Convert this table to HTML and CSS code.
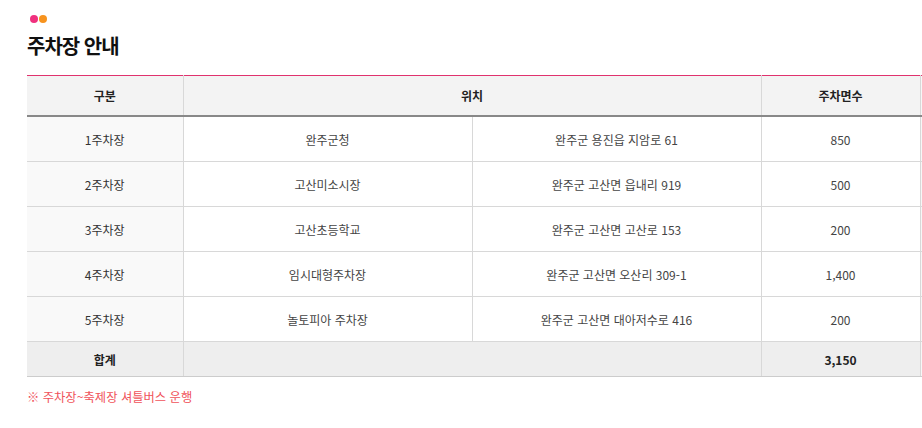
FILE: index.html
```html
<!DOCTYPE html>
<html lang="ko">
<head>
<meta charset="utf-8">
<link rel="stylesheet" href="styles.css">
</head>
<body>
<div class="page">
  <div class="dots"><span class="dot pink"></span><span class="dot orange"></span></div>
  <h2 class="title">주차장 안내</h2>
  <table class="park">
    <colgroup>
      <col class="c1"><col class="c2"><col class="c3"><col class="c4"><col class="c5">
    </colgroup>
    <thead>
      <tr><th>구분</th><th colspan="2">위치</th><th>주차면수</th><th class="x"></th></tr>
    </thead>
    <tbody>
      <tr><th>1주차장</th><td>완주군청</td><td>완주군 용진읍 지암로 61</td><td>850</td><td class="x"></td></tr>
      <tr><th>2주차장</th><td>고산미소시장</td><td>완주군 고산면 읍내리 919</td><td>500</td><td class="x"></td></tr>
      <tr><th>3주차장</th><td>고산초등학교</td><td>완주군 고산면 고산로 153</td><td>200</td><td class="x"></td></tr>
      <tr><th>4주차장</th><td>임시대형주차장</td><td>완주군 고산면 오산리 309-1</td><td>1,400</td><td class="x"></td></tr>
      <tr><th>5주차장</th><td>놀토피아 주차장</td><td>완주군 고산면 대아저수로 416</td><td>200</td><td class="x"></td></tr>
    </tbody>
    <tfoot>
      <tr><th>합계</th><td colspan="2"></td><td class="sum">3,150</td><td class="x"></td></tr>
    </tfoot>
  </table>
  <p class="note">※ 주차장~축제장 셔틀버스 운행</p>
</div>
</body>
</html>
```
FILE: styles.css
```css
html, body { margin: 0; padding: 0; background: #fff; overflow: hidden; }
body { font-family: "Noto Sans CJK KR", "Noto Sans", sans-serif; color: #333; }
.page { padding: 15px 0 0 27px; width: 920px; }
.dots { display: flex; gap: 1px; height: 10px; margin-left: 3px; }
.dot { width: 8px; height: 8px; border-radius: 50%; display: block; }
.pink { background: #f0307e; }
.orange { background: #f7931e; }
.title { margin: 6px 0 0; font-size: 20px; font-weight: 700; color: #111; letter-spacing: -1px; line-height: 30px; }
.park { margin-top: 14px; border-collapse: collapse; table-layout: fixed; width: 913px; font-size: 12px; border-top: 1px solid #e0326e; }
.c1 { width: 156px; } .c2 { width: 289px; } .c3 { width: 289px; } .c4 { width: 159px; } .c5 { width: 20px; }
.park th, .park td { text-align: center; padding: 0; height: 44px; border: 1px solid #d8d8d8; border-top: none; }
.park tr > :first-child { border-left: none; }
.park thead th { background: #f3f3f3; color: #222; font-weight: 700; height: 39px; border-bottom: 2px solid #888; }
.park tbody th { background: #f9f9f9; font-weight: 400; color: #333; }
.park tbody td { background: #fff; color: #444; }
.park tfoot th, .park tfoot td { background: #eeeeee; font-weight: 700; color: #222; height: 34px; border-bottom: 1px solid #ccc; }
.park .x { background: #f7f7f7; }
.note { margin: 11px 0 0; font-size: 12.3px; color: #f0525a; }
```
